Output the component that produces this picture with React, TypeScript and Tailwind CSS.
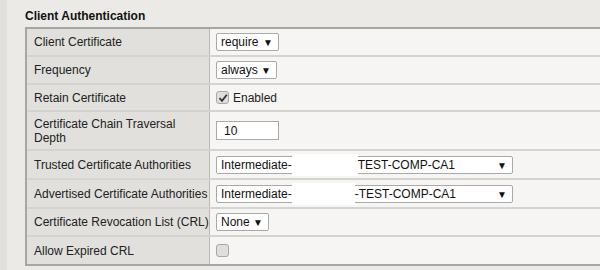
import React from "react";

const Select = ({ children, w }: { children: React.ReactNode; w: string }) => (
  <div
    className={`relative flex h-[18px] items-center rounded-[2px] border border-[#a9a9a9] bg-white pl-[4px] text-[12px] text-[#111] ${w}`}
  >
    <div className="flex items-center whitespace-nowrap">{children}</div>
    <span className="absolute right-[5px] top-[3px] text-[10px] leading-[11px] text-[#111]">▼</span>
  </div>
);

const Redacted = ({ w }: { w: string }) => (
  <span className={`inline-block h-[22px] bg-white ${w}`} />
);

const Check = ({ checked }: { checked?: boolean }) => (
  <span className="flex h-[13px] w-[13px] items-center justify-center rounded-[3px] border border-[#a8a8a8] bg-[#dedede]">
    {checked && (
      <svg width="10" height="10" viewBox="0 0 10 10">
        <path d="M1.5 5.2 L4 7.8 L8.8 1.8" fill="none" stroke="#333" strokeWidth="1.8" />
      </svg>
    )}
  </span>
);

const Row = ({
  label,
  h,
  children,
  last,
}: {
  label: React.ReactNode;
  h: string;
  children: React.ReactNode;
  last?: boolean;
}) => (
  <div className={`flex ${h} ${last ? "" : "border-b-2 border-[#d4d3cf]"}`}>
    <div className="flex w-[183px] shrink-0 items-center border-r border-[#b9b8b4] bg-[#e1e0dc] pl-[7px] text-[12px] leading-[14px] text-[#222]">
      {label}
    </div>
    <div className="flex flex-1 items-center bg-[#f6f5f3] pl-[6px]">{children}</div>
  </div>
);

const ClientAuth = () => {
  return (
    <div
      className="flex h-[270px] w-[600px] overflow-hidden bg-[#ebeae6]"
      style={{ fontFamily: '"Liberation Sans", Arial, sans-serif' }}
    >
      <div className="w-[7px] shrink-0 bg-[#e1e0dc]" />
      <div className="flex-1 pl-[18px]">
        <h1 className="pt-[9px] pb-[4px] text-[12px] font-bold leading-[14px] text-[#111]">
          Client Authentication
        </h1>
        <div className="w-[640px] border-2 border-r-0 border-[#a6a6a4]">
          <Row label="Client Certificate" h="h-[28px]">
            <Select w="w-[63px]">require</Select>
          </Row>
          <Row label="Frequency" h="h-[28px]">
            <Select w="w-[61px]">always</Select>
          </Row>
          <Row label="Retain Certificate" h="h-[27px]">
            <div className="flex items-center gap-[4px] text-[12px] text-[#222]">
              <Check checked />
              <span>Enabled</span>
            </div>
          </Row>
          <Row
            label={
              <span>
                Certificate Chain Traversal
                <br />
                Depth
              </span>
            }
            h="h-[39px]"
          >
            <div className="flex h-[19px] w-[63px] items-center border border-[#a9a9a9] bg-white pl-[7px] text-[12px] text-[#111]">
              10
            </div>
          </Row>
          <Row label="Trusted Certificate Authorities" h="h-[29px]">
            <Select w="w-[297px]">
              Intermediate-
              <Redacted w="w-[66px]" />
              TEST-COMP-CA1
            </Select>
          </Row>
          <Row label="Advertised Certificate Authorities" h="h-[29px]">
            <Select w="w-[297px]">
              Intermediate-
              <Redacted w="w-[63px]" />
              -TEST-COMP-CA1
            </Select>
          </Row>
          <Row label="Certificate Revocation List (CRL)" h="h-[28px]">
            <Select w="w-[53px]">None</Select>
          </Row>
          <Row label="Allow Expired CRL" h="h-[27px]" last>
            <Check />
          </Row>
        </div>
      </div>
    </div>
  );
};

export default ClientAuth;
